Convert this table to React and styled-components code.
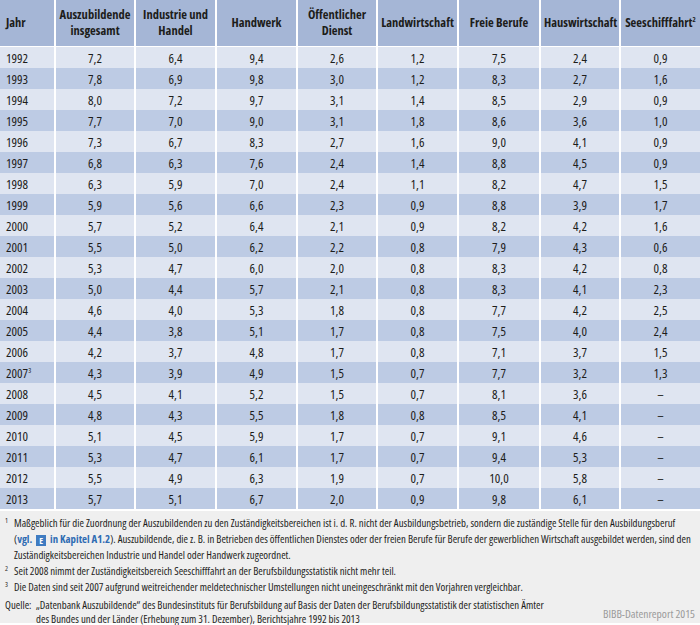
import React from 'react';
import styled, { createGlobalStyle } from 'styled-components';

const GlobalStyle = createGlobalStyle`
  body {
    margin: 0;
    background: #ffffff;
    font-family: "Open Sans", "DejaVu Sans Condensed", sans-serif;
    font-stretch: condensed;
    color: #1d1d1b;
  }
`;

const columns = [
  { label: 'Jahr', width: 55, align: 'left' },
  { label: ['Auszubildende', 'insgesamt'], width: 80 },
  { label: ['Industrie und', 'Handel'], width: 81 },
  { label: 'Handwerk', width: 81 },
  { label: ['Öffentlicher', 'Dienst'], width: 80 },
  { label: 'Landwirtschaft', width: 81 },
  { label: 'Freie Berufe', width: 82 },
  { label: 'Hauswirtschaft', width: 80 },
  { label: 'Seeschifffahrt', note: '2', width: 80 },
];

const rows = [
  ['1992', '7,2', '6,4', '9,4', '2,6', '1,2', '7,5', '2,4', '0,9'],
  ['1993', '7,8', '6,9', '9,8', '3,0', '1,2', '8,3', '2,7', '1,6'],
  ['1994', '8,0', '7,2', '9,7', '3,1', '1,4', '8,5', '2,9', '0,9'],
  ['1995', '7,7', '7,0', '9,0', '3,1', '1,8', '8,6', '3,6', '1,0'],
  ['1996', '7,3', '6,7', '8,3', '2,7', '1,6', '9,0', '4,1', '0,9'],
  ['1997', '6,8', '6,3', '7,6', '2,4', '1,4', '8,8', '4,5', '0,9'],
  ['1998', '6,3', '5,9', '7,0', '2,4', '1,1', '8,2', '4,7', '1,5'],
  ['1999', '5,9', '5,6', '6,6', '2,3', '0,9', '8,8', '3,9', '1,7'],
  ['2000', '5,7', '5,2', '6,4', '2,1', '0,9', '8,2', '4,2', '1,6'],
  ['2001', '5,5', '5,0', '6,2', '2,2', '0,8', '7,9', '4,3', '0,6'],
  ['2002', '5,3', '4,7', '6,0', '2,0', '0,8', '8,3', '4,2', '0,8'],
  ['2003', '5,0', '4,4', '5,7', '2,1', '0,8', '8,3', '4,1', '2,3'],
  ['2004', '4,6', '4,0', '5,3', '1,8', '0,8', '7,7', '4,2', '2,5'],
  ['2005', '4,4', '3,8', '5,1', '1,7', '0,8', '7,5', '4,0', '2,4'],
  ['2006', '4,2', '3,7', '4,8', '1,7', '0,8', '7,1', '3,7', '1,5'],
  ['2007', '4,3', '3,9', '4,9', '1,5', '0,7', '7,7', '3,2', '1,3'],
  ['2008', '4,5', '4,1', '5,2', '1,5', '0,7', '8,1', '3,6', '–'],
  ['2009', '4,8', '4,3', '5,5', '1,8', '0,8', '8,5', '4,1', '–'],
  ['2010', '5,1', '4,5', '5,9', '1,7', '0,7', '9,1', '4,6', '–'],
  ['2011', '5,3', '4,7', '6,1', '1,7', '0,7', '9,4', '5,3', '–'],
  ['2012', '5,5', '4,9', '6,3', '1,9', '0,7', '10,0', '5,8', '–'],
  ['2013', '5,7', '5,1', '6,7', '2,0', '0,9', '9,8', '6,1', '–'],
];

const Page = styled.div`
  width: 700px;
  height: 625px;
  overflow: hidden;
`;

const Table = styled.table`
  width: 700px;
  border-collapse: collapse;
  table-layout: fixed;
`;

const HeadCell = styled.th`
  height: 46px;
  padding: 0 3px;
  padding-left: ${(p) => (p.$align === 'left' ? '6px' : '3px')};
  background: #a5b6d6;
  border-right: 2px solid #ffffff;
  border-bottom: 1px solid #ffffff;
  font-size: 12.5px;
  font-weight: bold;
  line-height: 16px;
  text-align: ${(p) => p.$align || 'center'};
  vertical-align: middle;
  white-space: nowrap;

  &:last-child {
    border-right: none;
  }
`;

const Row = styled.tr`
  background: ${(p) => (p.$dark ? '#bdcbe4' : '#dfe5f1')};
`;

const Cell = styled.td`
  height: 21px;
  padding: 0 4px;
  padding-left: ${(p) => (p.$align === 'left' ? '6px' : '4px')};
  border-right: 2px solid #ffffff;
  font-size: 13px;
  text-align: ${(p) => p.$align || 'center'};
  vertical-align: middle;

  &:last-child {
    border-right: none;
  }
`;

const Sup = styled.sup`
  font-size: 7px;
  line-height: 0;
  vertical-align: 5px;
`;

const Notes = styled.div`
  background: #efefef;
  margin-top: 2px;
  padding: 4px 0 0;
  height: 112px;
  box-sizing: border-box;
  font-size: 10.8px;
  line-height: 16px;
`;

const Note = styled.div`
  display: flex;
  padding-left: 5px;
`;

const NoteMark = styled.span`
  width: 9px;
  flex: none;
  font-size: 7px;
  line-height: 12px;
`;

const NoteText = styled.div`
  flex: 1;
`;

const Line = styled.div`
  white-space: nowrap;
`;

const Link = styled.span`
  color: #2f6cb3;
  font-weight: bold;
`;

const InfoBox = styled.span`
  display: inline-block;
  width: 10px;
  height: 11px;
  margin: 0 2px;
  background: #3f7cc2;
  color: #ffffff;
  font-size: 9px;
  line-height: 11px;
  text-align: center;
  vertical-align: -1px;
`;

const SourceRow = styled.div`
  display: flex;
  margin-top: 3px;
  padding-left: 5px;
  padding-right: 5px;
  line-height: 14px;
`;

const SourceLabel = styled.span`
  width: 31px;
  flex: none;
`;

const SourceText = styled.div`
  flex: 1;
`;

const Credit = styled.span`
  align-self: center;
  margin-top: 4px;
  color: #9a9a9a;
  font-size: 11.5px;
  white-space: nowrap;
`;

export default function App() {
  return (
    <Page>
      <GlobalStyle />
      <Table>
        <colgroup>
          {columns.map((c, i) => (
            <col key={i} style={{ width: c.width }} />
          ))}
        </colgroup>
        <thead>
          <tr>
            {columns.map((c, i) => (
              <HeadCell key={i} $align={c.align}>
                {Array.isArray(c.label) ? (
                  <>
                    {c.label[0]}
                    <br />
                    {c.label[1]}
                  </>
                ) : (
                  c.label
                )}
                {c.note && <Sup>{c.note}</Sup>}
              </HeadCell>
            ))}
          </tr>
        </thead>
        <tbody>
          {rows.map((r, i) => (
            <Row key={r[0]} $dark={i % 2 === 1}>
              {r.map((v, j) => (
                <Cell key={j} $align={j === 0 ? 'left' : 'center'}>
                  {v}
                  {j === 0 && v === '2007' && <Sup>3</Sup>}
                </Cell>
              ))}
            </Row>
          ))}
        </tbody>
      </Table>
      <Notes>
        <Note>
          <NoteMark>1</NoteMark>
          <NoteText>
            <Line>
              Maßgeblich für die Zuordnung der Auszubildenden zu den Zuständigkeitsbereichen ist i. d. R. nicht der Ausbildungsbetrieb, sondern die zuständige Stelle für den Ausbildungsberuf
            </Line>
            <Line>
              (<Link>vgl. <InfoBox>E</InfoBox> in Kapitel A1.2</Link>). Auszubildende, die z. B. in Betrieben des öffentlichen Dienstes oder der freien Berufe für Berufe der gewerblichen Wirtschaft ausgebildet werden, sind den
            </Line>
            <Line>Zuständigkeitsbereichen Industrie und Handel oder Handwerk zugeordnet.</Line>
          </NoteText>
        </Note>
        <Note>
          <NoteMark>2</NoteMark>
          <NoteText>Seit 2008 nimmt der Zuständigkeitsbereich Seeschifffahrt an der Berufsbildungsstatistik nicht mehr teil.</NoteText>
        </Note>
        <Note>
          <NoteMark>3</NoteMark>
          <NoteText>Die Daten sind seit 2007 aufgrund weitreichender meldetechnischer Umstellungen nicht uneingeschränkt mit den Vorjahren vergleichbar.</NoteText>
        </Note>
        <SourceRow>
          <SourceLabel>Quelle:</SourceLabel>
          <SourceText>
            <Line>„Datenbank Auszubildende“ des Bundesinstituts für Berufsbildung auf Basis der Daten der Berufsbildungsstatistik der statistischen Ämter</Line>
            <Line>des Bundes und der Länder (Erhebung zum 31. Dezember), Berichtsjahre 1992 bis 2013</Line>
          </SourceText>
          <Credit>BIBB-Datenreport 2015</Credit>
        </SourceRow>
      </Notes>
    </Page>
  );
}
